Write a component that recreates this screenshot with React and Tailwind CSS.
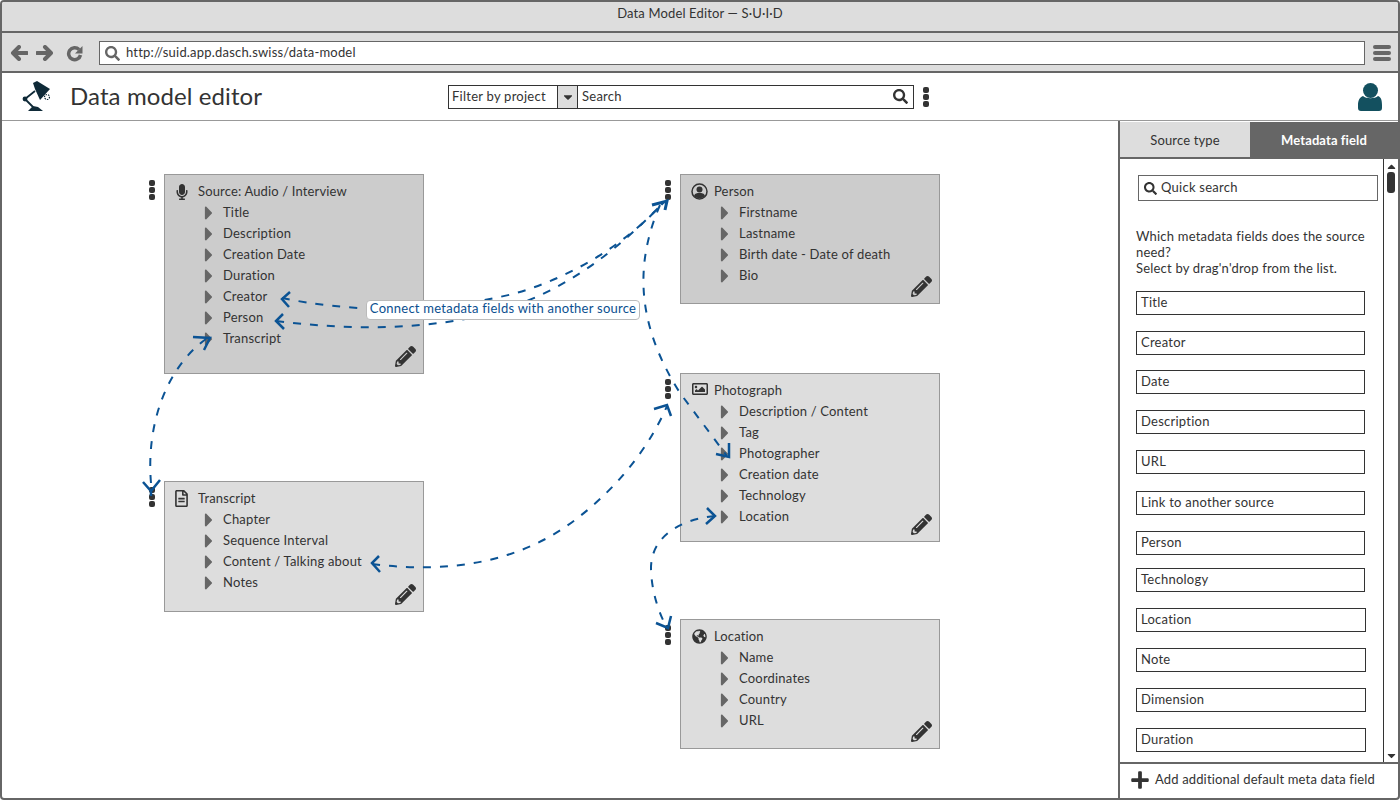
import React from "react";
import {
  FaSearch,
  FaCaretDown,
  FaCaretRight,
  FaPencilAlt,
  FaMicrophone,
  FaRegFileAlt,
  FaRegImage,
  FaGlobeAmericas,
  FaPlus,
  FaCaretUp,
} from "react-icons/fa";

const PersonCircle = () => (
  <svg width="17" height="17" viewBox="0 0 17 17">
    <circle cx="8.5" cy="8.5" r="7.5" fill="none" stroke="#333333" strokeWidth="1.5" />
    <circle cx="8.5" cy="6.5" r="3" fill="#333333" />
    <path d="M3 13 C4 10 6 10 8.5 10 C11 10 13 10 14 13 C12 16 5 16 3 13 Z" fill="#333333" />
  </svg>
);

const nodes = [
  {
    title: "Source: Audio / Interview",
    icon: <FaMicrophone size={16} />,
    iconCls: "flex w-[33px] justify-center",
    pos: "left-[162px] top-[53px] h-[200px] bg-[#cccccc]",
    rows: ["Title", "Description", "Creation Date", "Duration", "Creator", "Person", "Transcript"],
  },
  {
    title: "Transcript",
    icon: <FaRegFileAlt size={17} />,
    iconCls: "flex w-[33px] justify-center",
    pos: "left-[162px] top-[360px] h-[131px] bg-[#dddddd]",
    rows: ["Chapter", "Sequence Interval", "Content / Talking about", "Notes"],
  },
  {
    title: "Person",
    icon: <PersonCircle />,
    iconCls: "flex w-[33px] justify-center pl-[4px]",
    pos: "left-[678px] top-[53px] h-[130px] bg-[#cccccc]",
    rows: ["Firstname", "Lastname", "Birth date - Date of death", "Bio"],
  },
  {
    title: "Photograph",
    icon: <FaRegImage size={16} />,
    iconCls: "flex w-[33px] justify-center pl-[4px] -mt-[4px]",
    pos: "left-[678px] top-[252px] h-[169px] bg-[#dddddd]",
    rows: ["Description / Content", "Tag", "Photographer", "Creation date", "Technology", "Location"],
  },
  {
    title: "Location",
    icon: <FaGlobeAmericas size={15} />,
    iconCls: "flex w-[33px] justify-center pl-[4px]",
    pos: "left-[678px] top-[498px] h-[130px] bg-[#dddddd]",
    rows: ["Name", "Coordinates", "Country", "URL"],
  },
];

const fields = [
  { label: "Title", cls: "mt-[15px] w-[229px]" },
  { label: "Creator", cls: "mt-[16px] w-[229px]" },
  { label: "Date", cls: "mt-[15px] w-[229px]" },
  { label: "Description", cls: "mt-[16px] w-[229px]" },
  { label: "URL", cls: "mt-[16px] w-[229px]" },
  { label: "Link to another source", cls: "mt-[17px] w-[229px]" },
  { label: "Person", cls: "mt-[16px] w-[229px]" },
  { label: "Technology", cls: "mt-[13px] w-[229px]" },
  { label: "Location", cls: "mt-[16px] w-[230px]" },
  { label: "Note", cls: "mt-[16px] w-[230px]" },
  { label: "Dimension", cls: "mt-[16px] w-[230px]" },
  { label: "Duration", cls: "mt-[16px] w-[230px]" },
];

const Dots = ({ className }) => (
  <div className={`flex w-[6px] flex-col gap-[1px] ${className}`}>
    <span className="h-[6px] w-[6px] rounded-[2px] bg-[#333333]" />
    <span className="h-[6px] w-[6px] rounded-[2px] bg-[#333333]" />
    <span className="h-[6px] w-[6px] rounded-[2px] bg-[#333333]" />
  </div>
);

const Node = ({ node }) => (
  <div className={`absolute w-[260px] border border-[#999999] pt-[6px] ${node.pos}`}>
    <Dots className="absolute -left-[16px] top-[5px]" />
    <div className="flex h-[21px] items-center text-[#333333]">
      <span className={node.iconCls}>{node.icon}</span>
      <span className="tracking-[0.15px]">{node.title}</span>
    </div>
    {node.rows.map((row) => (
      <div key={row} className="flex h-[21px] items-center text-[#333333]">
        <FaCaretRight size={22} className="ml-[33px] shrink-0 text-[#666666]" />
        <span className="ml-[3px] tracking-[0.2px]">{row}</span>
      </div>
    ))}
    <FaPencilAlt size={21} className="absolute bottom-[6px] right-[7px] text-[#333333]" />
  </div>
);

const Logo = () => (
  <svg width="32" height="34" viewBox="0 0 32 34" className="shrink-0">
    <path d="M11 3 L15 1 L28 9 L18 20 L13 9 Z" fill="#0f2a38" />
    <circle cx="25" cy="17" r="2.5" fill="none" stroke="#0f2a38" strokeWidth="1.2" strokeDasharray="1.5 1" />
    <circle cx="3" cy="19" r="2.4" fill="#0f2a38" />
    <path d="M3 19 L13 11 M3 19 L11 27" stroke="#0f2a38" strokeWidth="1.8" />
    <path d="M6 31 L21 31 L16 27 L11 26 Z" fill="#0f2a38" />
  </svg>
);

const Connectors = () => {
  const dash = { stroke: "#0b5394", strokeWidth: 2, fill: "none" };
  return (
    <svg className="pointer-events-none absolute inset-0 h-full w-full" viewBox="2 121 1116 677">
      <g {...dash} strokeDasharray="8 9">
        <path d="M151 483 C146 425 166 368 206 339" />
        <path d="M282 298 C340 310 420 316 513 294 C570 278 625 245 664 202" />
        <path d="M276 321 C340 329 400 330 460 320 C540 306 600 268 662 204" />
        <path d="M660 205 C632 270 640 330 680 393 L727 456" />
        <path d="M372 564 C450 574 520 562 575 520 C620 486 650 445 667 406" />
        <path d="M715 516 C675 520 650 540 651 570 C652 595 660 615 667 628" />
      </g>
      <g stroke="#0b5394" strokeWidth="2.5" fill="none">
        <path d="M193 337 L210 338 L204 350" />
        <path d="M290 292 L282 299 L289 307" />
        <path d="M283 314 L276 321 L284 329" />
        <path d="M652 205 L667 201 L665 210" strokeWidth="3" />
        <path d="M716 454 L729 457 L729 443" />
        <path d="M379 556 L372 563 L380 572" />
        <path d="M654 409 L667 405 L671 416" />
        <path d="M707 508 L715 516 L706 524" />
        <path d="M656 623 L668 628 L671 616" />
        <path d="M143 482 L151 491 L160 480 M151 491 L151 496" />
      </g>
    </svg>
  );
};

export default function App() {
  return (
    <div className="flex h-[800px] w-[1400px] flex-col overflow-hidden rounded-[4px] border-2 border-[#666666] bg-white font-['Lato',sans-serif] text-[13px] text-[#333333]">
      <div className="flex h-[31px] items-center justify-center border-b-2 border-[#666666] bg-[#dddddd] pb-[5px] text-[13px] tracking-[0.15px]">
        Data Model Editor — S·U·I·D
      </div>
      <div className="flex h-[40px] items-center border-b-2 border-[#666666] bg-[#dddddd] pt-[2px]">
        <svg width="18" height="16" viewBox="0 0 18 16" className="ml-[8px]">
          <path d="M17 8 H4 M9 2 L3 8 L9 14" fill="none" stroke="#666666" strokeWidth="4" strokeLinecap="round" strokeLinejoin="round" />
        </svg>
        <svg width="18" height="16" viewBox="0 0 18 16" className="ml-[8px]">
          <path d="M1 8 H14 M9 2 L15 8 L9 14" fill="none" stroke="#666666" strokeWidth="4" strokeLinecap="round" strokeLinejoin="round" />
        </svg>
        <svg width="17" height="17" viewBox="0 0 17 17" className="ml-[12px]">
          <path d="M13 4.5 A6 6 0 1 0 14.5 10" fill="none" stroke="#666666" strokeWidth="3.5" />
          <path d="M16.5 1 V8.5 H9 Z" fill="#666666" />
        </svg>
        <div className="ml-[16px] flex h-[24px] w-[1266px] items-center border border-[#666666] bg-white pl-[5px]">
          <FaSearch size={15} className="text-[#666666]" />
          <span className="ml-[6px] tracking-[0.2px]">http://suid.app.dasch.swiss/data-model</span>
        </div>
        <div className="ml-[8px] flex w-[18px] flex-col gap-[2px]">
          <span className="h-[4px] rounded-[2px] bg-[#666666]" />
          <span className="h-[4px] rounded-[2px] bg-[#666666]" />
          <span className="h-[4px] rounded-[2px] bg-[#666666]" />
        </div>
      </div>
      <div className="flex h-[48px] items-center border-b border-[#999999] bg-white">
        <div className="ml-[20px]">
          <Logo />
        </div>
        <span className="-mt-[2px] ml-[16px] w-[378px] text-[24px] tracking-[0.1px] text-[#333333]">Data model editor</span>
        <div className="flex h-[24px] w-[466px] border border-[#333333]">
          <div className="flex w-[108px] items-center pl-[3px] tracking-[0.25px]">Filter by project</div>
          <div className="flex w-[21px] items-center justify-center border-x border-[#333333] bg-[#dddddd]">
            <FaCaretDown size={14} />
          </div>
          <div className="flex flex-1 items-center justify-between pl-[4px] pr-[5px] tracking-[0.25px]">
            Search
            <FaSearch size={15} />
          </div>
        </div>
        <Dots className="ml-[9px]" />
        <svg width="24" height="28" viewBox="0 0 24 28" className="ml-[429px]">
          <circle cx="12.5" cy="7.5" r="7.5" fill="#13505f" />
          <path d="M5 13 C8 16 17 16 20 13 C23 14 24 17 24 22 L24 25 C24 27 23 28 21 28 L3 28 C1 28 0 27 0 25 L0 22 C0 17 2 14 5 13 Z" fill="#13505f" />
        </svg>
      </div>
      <div className="flex min-h-0 flex-1">
        <div className="relative flex-1">
          {nodes.map((node) => (
            <Node key={node.title} node={node} />
          ))}
          <Connectors />
          <div className="absolute left-[364px] top-[179px] flex h-[20px] w-[274px] items-center justify-center rounded-[4px] border border-[#bbbbbb] bg-white pb-[2px] tracking-[0.25px] text-[#0b4f8f]">
            Connect metadata fields with another source
          </div>
        </div>
        <div className="flex w-[280px] flex-col border-l-2 border-[#666666] pt-[1px]">
          <div className="flex h-[37px] shrink-0 border-b-2 border-[#666666]">
            <div className="flex w-[130px] items-center justify-center bg-[#dddddd] pt-[2px] tracking-[0.15px]">Source type</div>
            <div className="flex flex-1 items-center justify-center bg-[#666666] pt-[2px] font-bold tracking-[0.1px] text-white">Metadata field</div>
          </div>
          <div className="flex min-h-0 flex-1">
            <div className="flex-1 overflow-hidden pl-[16px]">
              <div className="ml-[2px] mt-[16px] flex h-[26px] w-[240px] items-center border border-[#666666] pl-[5px] tracking-[0.25px]">
                <FaSearch size={13} />
                <span className="ml-[4px]">Quick search</span>
              </div>
              <p className="mt-[27px] w-[236px] leading-[16px] tracking-[0.2px]">
                Which metadata fields does the source need?
                <br />
                Select by drag'n'drop from the list.
              </p>
              {fields.map((field) => (
                <div key={field.label} className={`flex h-[24px] items-center border border-[#333333] pl-[4px] tracking-[0.25px] ${field.cls}`}>
                  {field.label}
                </div>
              ))}
            </div>
            <div className="flex w-[15px] flex-col items-center justify-between border-l border-[#333333]">
              <div className="flex flex-col items-center">
                <FaCaretUp size={13} className="mt-[1px]" />
                <span className="mt-[-1px] h-[21px] w-[8px] rounded-[3px] bg-[#333333]" />
              </div>
              <FaCaretDown size={13} />
            </div>
          </div>
          <div className="flex h-[36px] shrink-0 items-center border-t-2 border-[#666666] pb-[2px] pl-[10px] tracking-[0.15px]">
            <FaPlus size={20} />
            <span className="ml-[5px]">Add additional default meta data field</span>
          </div>
        </div>
      </div>
    </div>
  );
}
